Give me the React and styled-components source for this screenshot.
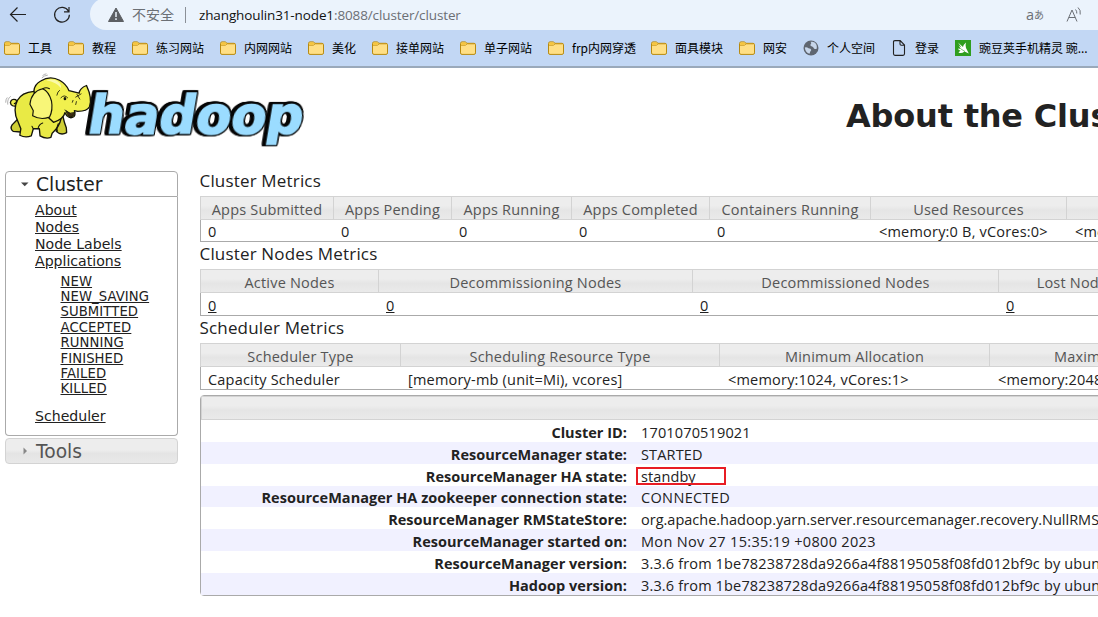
import React from "react";
import styled, { createGlobalStyle } from "styled-components";

const GlobalStyle = createGlobalStyle`
  * { box-sizing: border-box; }
  html, body { margin: 0; padding: 0; overflow: hidden; background: #fff; }
`;

const uiFont = `"Open Sans", "Noto Sans CJK SC", sans-serif`;

const Window = styled.div`
  width: 1098px;
  height: 617px;
  overflow: hidden;
  display: flex;
  flex-direction: column;
  background: #fff;
  color: #222;
  font-family: ${uiFont};
`;

/* ---------- browser chrome ---------- */
const Chrome = styled.header`
  flex: none;
  height: 68px;
  background: #c2d7f4;
  border-bottom: 2px solid #9aa9ba;
  overflow: hidden;
`;
const Toolbar = styled.div`
  display: flex;
  height: 30px;
  padding-left: 8px;
`;
const ToolButton = styled.span`
  display: flex;
  align-items: center;
  width: ${(p) => p.$w}px;
  height: 30px;
`;
const AddressBar = styled.div`
  flex: 1;
  display: flex;
  align-items: center;
  height: 32px;
  margin-top: -2px;
  padding: 2px 14px 0 17px;
  border-radius: 16px 0 0 16px;
  background: #ebf3fc;
  font-size: 14px;
  white-space: nowrap;
`;
const Insecure = styled.span`
  margin-left: 7px;
  color: #6b6f75;
  line-height: 20px;
`;
const Divider = styled.span`
  width: 1px;
  height: 16px;
  margin: 0 13px 0 11px;
  background: #8b9097;
`;
const Url = styled.span`
  flex: 1;
  color: #6b6f75;
  font-size: 13.5px;
  letter-spacing: -0.12px;
`;
const Host = styled.span`
  color: #111;
`;
const AddressIcons = styled.span`
  display: flex;
  gap: 21px;
  align-items: center;
`;
const Bookmarks = styled.nav`
  display: flex;
  align-items: center;
  gap: 16px;
  height: 36px;
  padding-left: 4px;
  white-space: nowrap;
  font-size: 12px;
  color: #000;
`;
const Bookmark = styled.span`
  display: flex;
  flex: none;
  align-items: center;
  gap: 8px;
  width: ${(p) => p.$w}px;
  font-family: "Noto Sans CJK SC", sans-serif;
  line-height: 18px;
  svg { flex: none; }
`;

/* ---------- page header ---------- */
const PageHeader = styled.div`
  flex: none;
  display: flex;
  justify-content: space-between;
  height: 101px;
  overflow: hidden;
`;
const Title = styled.h1`
  flex: none;
  width: 252px;
  margin: 0;
  padding-top: 29px;
  font: bold 32px/38px "DejaVu Sans", sans-serif;
  letter-spacing: -0.2px;
  white-space: nowrap;
`;
const Columns = styled.div`
  flex: 1;
  display: flex;
  align-items: flex-start;
`;

/* ---------- sidebar ---------- */
const Sidebar = styled.aside`
  flex: none;
  width: 173px;
  margin: 2px 22px 0 5px;
  font-family: "DejaVu Sans", sans-serif;
`;
const AccordionHead = styled.h3`
  display: flex;
  align-items: center;
  height: 26px;
  margin: 0;
  padding-left: 14px;
  gap: 6px;
  font-size: 18.7px;
  font-weight: normal;
  border: 1px solid ${(p) => (p.$open ? "#aaa" : "#d3d3d3")};
  border-radius: ${(p) => (p.$open ? "4px 4px 0 0" : "4px")};
  color: ${(p) => (p.$open ? "#212121" : "#555")};
  background: ${(p) => (p.$open ? "#fff" : "linear-gradient(#ededed 45%, #e4e4e4 60%, #e9e9e9)")};
`;
const AccordionBody = styled.div`
  height: 239px;
  margin-bottom: 2px;
  padding: 5px 0 0 29px;
  border: 1px solid #aaa;
  border-top: 0;
  border-radius: 0 0 4px 4px;
`;
const LinkList = styled.ul`
  list-style: none;
  margin: 0;
  padding: 0;
  font-size: 14.1px;
  line-height: 17px;
`;
const StateList = styled.ul`
  list-style: none;
  margin: 3.6px 0 11.4px;
  padding: 0 0 0 25.5px;
  font-size: 13.2px;
  line-height: 15.4px;
  letter-spacing: 0.1px;
`;
const Link = styled.a`
  color: #212121;
  text-decoration: underline;
`;

/* ---------- metric tables ---------- */
const Content = styled.main`
  flex: none;
  width: 1500px;
`;
const SectionTitle = styled.h3`
  height: 27px;
  margin: 0 0 0 -0.5px;
  font-size: 17px;
  font-weight: normal;
  line-height: 24px;
  letter-spacing: 0.17px;
`;
const Table = styled.div`
  display: grid;
  grid-template-columns: ${(p) => p.$cols};
  grid-template-rows: 24px ${(p) => p.$row}px;
  border-bottom: 1px solid #aaa;
  font-size: 14.5px;
  white-space: nowrap;
`;
const HeadCell = styled.div`
  border: 1px solid #d3d3d3;
  border-right: 0;
  background: linear-gradient(#ededed 40%, #e5e5e5 60%, #eaeaea);
  color: #555;
  text-align: center;
  line-height: 25px;
  letter-spacing: 0.2px;
`;
const Cell = styled.div`
  padding-left: ${(p) => (p.$wide ? 9 : 8)}px;
  line-height: ${(p) => p.$lh}px;
  letter-spacing: 0.2px;
  &:nth-child(${(p) => p.$first}) { border-left: 1px solid #aaa; padding-left: 7px; }
`;
const Info = styled.div`
  margin-top: 5px;
  border: 1px solid #aaa;
  border-radius: 4px;
  font-size: 14.5px;
  white-space: nowrap;
`;
const InfoHead = styled.div`
  height: 24px;
  border: 1px solid #d3d3d3;
  background: linear-gradient(#ededed 40%, #e5e5e5 60%, #eaeaea);
`;
const InfoRow = styled.div`
  display: flex;
  height: ${(p) => p.$h}px;
  line-height: ${(p) => p.$h + 3}px;
  background: ${(p) => (p.$odd ? "#f1f1ff" : "#fff")};
`;
const InfoLabel = styled.div`
  width: 426px;
  text-align: right;
  font-weight: bold;
  letter-spacing: 0.03px;
`;
const InfoValue = styled.div`
  position: relative;
  margin-left: 14px;
  letter-spacing: ${(p) => p.$ls}px;
`;
const RedMark = styled.span`
  position: absolute;
  left: -5px;
  top: 3px;
  width: 90px;
  height: 18px;
  border: 2px solid #e81c24;
`;

/* ---------- drawings ---------- */
const Wordmark = styled.text`
  font: bold 52px "DejaVu Sans", sans-serif;
  fill: #9bdcff;
  stroke: #9bdcff;
  stroke-width: 1.6px;
  filter: drop-shadow(-1px 0 0 #050505) drop-shadow(1.5px 0 0 #050505)
    drop-shadow(0 1.5px 0 #050505) drop-shadow(0 -1.5px 0 #050505)
    drop-shadow(-3px 0.5px 0 #050505);
`;
const Folder = () => (
  <svg width="16" height="16" viewBox="0 0 16 16">
    <path d="M.5 3.5Q.5 1.9 2 1.9H5.3L7 3.3H14Q15.5 3.3 15.5 4.8V12.9Q15.5 14.4 14 14.4H2Q.5 14.4.5 12.9Z" fill="#ffdf85" stroke="#b78a10" />
    <path d="M1 5.2H5.4L7.2 3.8H14.6" fill="none" stroke="#c9981c" />
    <path d="M1.2 3Q1.3 2.4 2 2.4H5L6.3 3.5L5.2 4.7H1.2Z" fill="#f7c53b" />
  </svg>
);
const Globe = () => (
  <svg width="16" height="16" viewBox="0 0 16 16">
    <circle cx="8" cy="8" r="7.5" fill="#5f6670" />
    <path d="M1.800 7.500Q4 7 5.500 8.200Q8 8.500 8.300 10Q7 11.500 6.500 13.800Q2.500 13 1.800 7.500Z" fill="#c7d6ea" />
    <path d="M7.500 1.800Q9 3 7.800 4.300Q6.500 5 8 6Q10.500 6.500 11 8.500Q12.500 9.500 13.800 8.500Q14.500 3 9.500 1.800Z" fill="#c7d6ea" />
  </svg>
);
const PageIcon = () => (
  <svg width="16" height="16" viewBox="0 0 16 16" fill="none" stroke="#222" strokeWidth="1.1">
    <path d="M3.5.6H9.2L13.5 5V13.8Q13.5 15.4 12 15.4H4Q2.5 15.4 2.5 13.8V2Q2.5.6 3.8.6ZM9 .8V4Q9 5.2 10.2 5.2H13.3" />
  </svg>
);
const GreenIcon = () => (
  <svg width="16" height="16" viewBox="0 0 16 16">
    <rect width="16" height="16" fill="#2f9e1f" />
    <path d="M3 2.500L8 7Q8.500 4.500 11 2.500Q10 5.500 11 8L13.800 13.500L9.500 11.500Q6.500 14 3.500 12.500L5.500 10.500Q3.500 10.500 3 8.500L6 9L3.500 5.500L6.500 7.500Z" fill="#fff" />
    <path d="M6 9L10 11.500" stroke="#2f9e1f" strokeWidth=".6" />
  </svg>
);
const icons = { folder: Folder, globe: Globe, page: PageIcon, green: GreenIcon };

const Logo = () => (
  <svg width="310" height="90" viewBox="0 0 310 90">
    <g transform="translate(86 65.500) skewX(-9.500)">
      <Wordmark x="0" y="0" textLength="215" lengthAdjust="spacingAndGlyphs">hadoop</Wordmark>
    </g>
    <g transform="translate(3 6.500) scale(.3367 .323)" stroke="#15150a" strokeWidth="4" strokeLinejoin="round" strokeLinecap="round">
      <path d="M44 96Q24 102 22 87Q24 74 38 78Q44 86 34 90" fill="#f0ee50" />
      <path d="M160 140L158 176Q172 190 189 180L188 165Q182 150 178 130Z" fill="#cfcf35" />
      <path d="M42 140L27 156Q20 168 30 176L52 178L60 150Z" fill="#cfcf35" />
      <path d="M92 52Q55 55 43 80Q28 110 44 145L53 168L50 188Q66 197 84 190L90 168L108 168L110 190Q126 200 142 195L146 182Q168 160 172 138L150 60Z" fill="#e9ea45" />
      <path d="M150 148L100 100L92 50Q94 30 112 20Q140 2 168 18Q188 30 196 50L226 58Q228 42 248 34Q266 74 257 100Q250 114 222 114L212 112Q216 126 210 131Q200 138 190 128Q186 122 184 118Q180 138 150 148" fill="#f1f04e" />
      <path d="M118 44Q84 52 80 92L90 112L88 128Q112 142 138 132Q149 110 144 82Q136 52 118 44Z" fill="#f8f678" strokeWidth="3.500" />
      <path d="M118 44Q128 38 138 44" fill="none" strokeWidth="3" />
      <path d="M188 114Q200 124 214 117L208 129Q200 134 193 128Z" fill="#3a2a12" strokeWidth="2.500" />
      <path d="M104 168Q106 154 118 150M162 176Q158 166 164 152M90 168L86 160" fill="none" strokeWidth="3" />
      <path d="M160 64Q162 52 168 49M172 72Q182 60 192 72M216 70L232 60M220 62L228 76M218 84L216 93M208 80L206 86M184 110Q192 113 196 119" fill="none" strokeWidth="2.500" />
      <ellipse cx="184" cy="75" rx="4" ry="5" fill="#15150a" stroke="none" />
      <path d="M128 18Q154 10 168 26Q174 34 172 42Q160 24 128 18Z" fill="#fdfdc0" stroke="none" opacity=".8" />
      <path d="M116 10Q122 3 132 2M118 3Q122 -1 128 -2M14 92Q12 76 22 68M8 86Q8 76 12 72" fill="none" stroke="#888" strokeWidth="2" />
    </g>
  </svg>
);

/* ---------- data ---------- */
const bookmarks = [
  ["folder", "工具", 48], ["folder", "教程", 48], ["folder", "练习网站", 72], ["folder", "内网网站", 72],
  ["folder", "美化", 48], ["folder", "接单网站", 72], ["folder", "单子网站", 72], ["folder", "frp内网穿透", 87],
  ["folder", "面具模块", 72], ["folder", "网安", 48], ["globe", "个人空间", 72], ["page", "登录", 48],
  ["green", "豌豆荚手机精灵 豌...", 140],
];
const tables = [
  {
    title: "Cluster Metrics", cols: "133px 118px 120px 138px 161px 196px 634px", row: 21,
    heads: ["Apps Submitted", "Apps Pending", "Apps Running", "Apps Completed", "Containers Running", "Used Resources", "Total Resources"],
    cells: ["0", "0", "0", "0", "0", "<memory:0 B, vCores:0>", "<memory:0 B, vCores:0>"],
  },
  {
    title: "Cluster Nodes Metrics", cols: "178px 314px 306px 154px 548px", row: 22, linked: true,
    heads: ["Active Nodes", "Decommissioning Nodes", "Decommissioned Nodes", "Lost Nodes", "Unhealthy Nodes"],
    cells: ["0", "0", "0", "0", "0"],
  },
  {
    title: "Scheduler Metrics", cols: "200px 319px 270px 271px 440px", row: 22,
    heads: ["Scheduler Type", "Scheduling Resource Type", "Minimum Allocation", "Maximum Allocation", "Maximum Cluster Application Priority"],
    cells: ["Capacity Scheduler", "[memory-mb (unit=Mi), vcores]", "<memory:1024, vCores:1>", "<memory:2048, vCores:4>", "0"],
  },
];
const info = [
  ["Cluster ID:", "1701070519021", 22, 0.15],
  ["ResourceManager state:", "STARTED", 22, 0.15],
  ["ResourceManager HA state:", "standby", 22, 0.1],
  ["ResourceManager HA zookeeper connection state:", "CONNECTED", 21, 0.35],
  ["ResourceManager RMStateStore:", "org.apache.hadoop.yarn.server.resourcemanager.recovery.NullRMStateStore", 22, 0],
  ["ResourceManager started on:", "Mon Nov 27 15:35:19 +0800 2023", 22, 0.33],
  ["ResourceManager version:", "3.3.6 from 1be78238728da9266a4f88195058f08fd012bf9c by ubuntu", 22, 0.15],
  ["Hadoop version:", "3.3.6 from 1be78238728da9266a4f88195058f08fd012bf9c by ubuntu", 22, 0.15],
];
const states = ["NEW", "NEW_SAVING", "SUBMITTED", "ACCEPTED", "RUNNING", "FINISHED", "FAILED", "KILLED"];

export default function App() {
  return (
    <Window>
      <GlobalStyle />
      <Chrome>
        <Toolbar>
          <ToolButton $w={45}>
            <svg width="20" height="20" viewBox="0 0 20 20" fill="none" stroke="#222" strokeWidth="1.2"><path d="M18 9.500H2.500M9.500 2.500L2.500 9.500L9.500 16.500" /></svg>
          </ToolButton>
          <ToolButton $w={37}>
            <svg width="18" height="20" viewBox="0 0 18 20" fill="none" stroke="#222" strokeWidth="1.2"><path d="M15.500 6.200A7.400 7.400 0 1 0 16.400 9.800M16 2V6.800H11" /></svg>
          </ToolButton>
          <AddressBar>
            <svg width="18" height="16" viewBox="0 0 18 16"><path d="M9 1L16.500 14.500H1.500Z" fill="#5c5f63" stroke="#5c5f63" strokeLinejoin="round" /><path d="M9 5V10M9 11.300V13" stroke="#ebf3fc" strokeWidth="1.500" /></svg>
            <Insecure>不安全</Insecure>
            <Divider />
            <Url><Host>zhanghoulin31-node1</Host>:8088/cluster/cluster</Url>
            <AddressIcons>
              <svg width="19" height="18" viewBox="0 0 19 18" fill="#6b6f75"><text x="0" y="13.500" fontSize="14.500" fontFamily="Open Sans">a</text><text x="8" y="13" fontSize="10" fontFamily="Noto Sans CJK JP">あ</text></svg>
              <svg width="18" height="18" viewBox="0 0 18 18" fill="none" stroke="#6b6f75"><path d="M1 15.500L6 4L11 15.500M2.800 11.500H9.200M9.500 3.500Q11 5 10.800 7.500M12 1.500Q15 4 14.200 8.500" /></svg>
            </AddressIcons>
          </AddressBar>
        </Toolbar>
        <Bookmarks>
          {bookmarks.map(([icon, label, w]) => {
            const Icon = icons[icon];
            return <Bookmark key={label} $w={w}><Icon />{label}</Bookmark>;
          })}
        </Bookmarks>
      </Chrome>
      <PageHeader>
        <Logo />
        <Title>About the Cluster</Title>
      </PageHeader>
      <Columns>
        <Sidebar>
          <AccordionHead $open>
            <svg width="10" height="10" viewBox="0 0 10 10"><path d="M1 3.500H8.500L4.750 7.300Z" fill="#454545" /></svg>
            Cluster
          </AccordionHead>
          <AccordionBody>
            <LinkList>
              {["About", "Nodes", "Node Labels", "Applications"].map((t) => <li key={t}><Link>{t}</Link></li>)}
              <li>
                <StateList>{states.map((t) => <li key={t}><Link>{t}</Link></li>)}</StateList>
              </li>
              <li><Link>Scheduler</Link></li>
            </LinkList>
          </AccordionBody>
          <AccordionHead>
            <svg width="10" height="10" viewBox="0 0 10 10"><path d="M3.500 1.500V8.500L7 5Z" fill="#888" /></svg>
            Tools
          </AccordionHead>
        </Sidebar>
        <Content>
          {tables.map((t) => (
            <React.Fragment key={t.title}>
              <SectionTitle>{t.title}</SectionTitle>
              <Table $cols={t.cols} $row={t.row}>
                {t.heads.map((h) => <HeadCell key={h}>{h}</HeadCell>)}
                {t.cells.map((c, i) => (
                  <Cell key={i} $first={t.heads.length + 1} $lh={t.row + 3} $wide={c[0] === "<"}>{t.linked ? <Link>{c}</Link> : c}</Cell>
                ))}
              </Table>
            </React.Fragment>
          ))}
          <Info>
            <InfoHead />
            {info.map(([label, value, h, ls], i) => (
              <InfoRow key={label} $h={h} $odd={i % 2 === 1}>
                <InfoLabel>{label}</InfoLabel>
                <InfoValue $ls={ls}>{value}{value === "standby" && <RedMark />}</InfoValue>
              </InfoRow>
            ))}
          </Info>
        </Content>
      </Columns>
    </Window>
  );
}
